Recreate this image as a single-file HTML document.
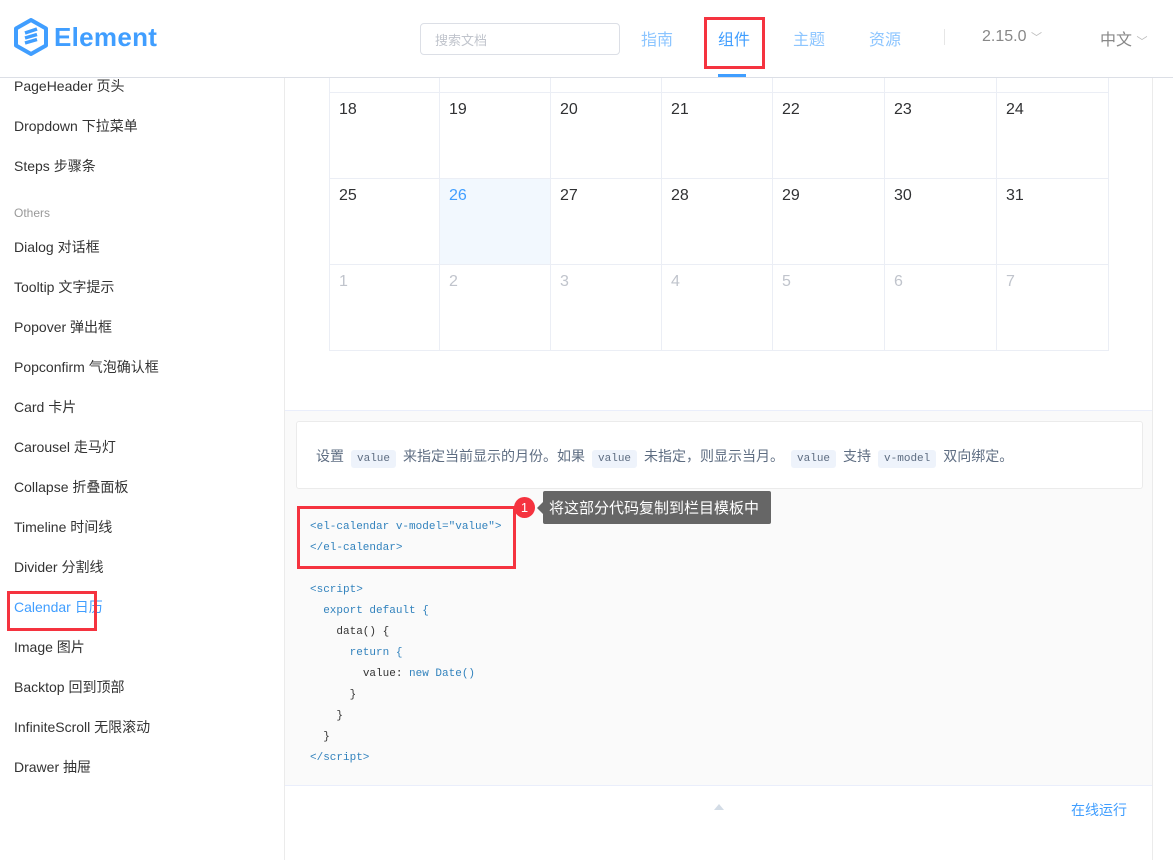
<!DOCTYPE html>
<html><head><meta charset="utf-8">
<style>
*{margin:0;padding:0;box-sizing:border-box}
body{width:1173px;height:826px;overflow:hidden;background:#fff;font-family:"Liberation Sans","Noto Sans CJK SC",sans-serif;position:relative;color:#303133}
.abs{position:absolute}
.hdr{left:0;top:0;width:1173px;height:78px;border-bottom:1px solid #dcdfe6;background:#fff;z-index:5}
.nav{font-size:16px;color:#8cc5ff;top:26px}
.side a{position:absolute;left:14px;font-size:14px;color:#333;white-space:nowrap}
.code{font-family:"Liberation Mono","Noto Sans CJK SC",monospace;font-size:11px;color:#3182bd;white-space:pre;line-height:21px}
.tag{display:inline-block;background:#eef3fb;color:#5e6d82;font-family:"Liberation Mono",monospace;font-size:11px;padding:3px 6px;border-radius:3px;margin:0 7px}
</style></head><body>
<div class="abs hdr">
  <svg class="abs" style="left:13px;top:18px" width="36" height="38" viewBox="0 0 36 38"><path d="M18 2 L33 10.5 V27.5 L18 36 L3 27.5 V10.5 Z" fill="none" stroke="#409eff" stroke-width="4" stroke-linejoin="round"/><path d="M12 15 L24 11 M12 20 L24 16.5 M12 25 L24 21.5" stroke="#409eff" stroke-width="3.5"/></svg>
  <div class="abs" style="left:54px;top:22px;font-size:26px;font-weight:bold;color:#409eff;letter-spacing:0.3px">Element</div>
  <div class="abs" style="left:420px;top:23px;width:200px;height:32px;border:1px solid #dcdfe6;border-radius:4px;font-size:13px;color:#c0c4cc;padding:6px 14px">搜索文档</div>
  <div class="abs nav" style="left:641px">指南</div>
  <div class="abs nav" style="left:718px;color:#409eff">组件</div>
  <div class="abs" style="left:718px;top:74px;width:28px;height:3px;background:#409eff"></div>
  <div class="abs" style="left:704px;top:17px;width:61px;height:52px;border:3px solid #f5333f"></div>
  <div class="abs nav" style="left:793px">主题</div>
  <div class="abs nav" style="left:869px">资源</div>
  <div class="abs" style="left:944px;top:29px;width:1px;height:16px;background:#e6e6e6"></div>
  <div class="abs" style="left:982px;top:28px;font-size:16px;color:#888">2.15.0 <span style="font-size:11px;color:#bbb">﹀</span></div>
  <div class="abs" style="left:1100px;top:26px;font-size:16px;color:#888">中文 <span style="font-size:11px;color:#bbb">﹀</span></div>
</div>
<div class="side">
  <a style="top:76px">PageHeader 页头</a>
  <a style="top:116px">Dropdown 下拉菜单</a>
  <a style="top:156px">Steps 步骤条</a>
  <a style="top:206px;font-size:12px;color:#999">Others</a>
  <a style="top:237px">Dialog 对话框</a>
  <a style="top:277px">Tooltip 文字提示</a>
  <a style="top:317px">Popover 弹出框</a>
  <a style="top:357px">Popconfirm 气泡确认框</a>
  <a style="top:397px">Card 卡片</a>
  <a style="top:437px">Carousel 走马灯</a>
  <a style="top:477px">Collapse 折叠面板</a>
  <a style="top:517px">Timeline 时间线</a>
  <a style="top:557px">Divider 分割线</a>
  <a style="top:597px;color:#409eff">Calendar 日历</a>
  <a style="top:637px">Image 图片</a>
  <a style="top:677px">Backtop 回到顶部</a>
  <a style="top:717px">InfiniteScroll 无限滚动</a>
  <a style="top:757px">Drawer 抽屉</a>
</div>
<div class="abs" style="left:7px;top:591px;width:90px;height:40px;border:3px solid #f5333f"></div>
<div class="abs" style="left:284px;top:60px;width:869px;height:800px;border-left:1px solid #ebebeb;border-right:1px solid #ebebeb"></div>
<div class="abs" style="left:329px;top:78px;width:1px;height:273px;background:#ebeef5"></div>
<div class="abs" style="left:329px;top:78px;width:780px;height:15px;border-bottom:1px solid #ebeef5;border-right:1px solid #ebeef5"></div>
<div class="abs" style="left:439px;top:78px;width:1px;height:273px;background:#ebeef5"></div>
<div class="abs" style="left:550px;top:78px;width:1px;height:273px;background:#ebeef5"></div>
<div class="abs" style="left:661px;top:78px;width:1px;height:273px;background:#ebeef5"></div>
<div class="abs" style="left:772px;top:78px;width:1px;height:273px;background:#ebeef5"></div>
<div class="abs" style="left:884px;top:78px;width:1px;height:273px;background:#ebeef5"></div>
<div class="abs" style="left:996px;top:78px;width:1px;height:273px;background:#ebeef5"></div>
<div class="abs" style="left:1108px;top:78px;width:1px;height:273px;background:#ebeef5"></div>
<div class="abs" style="left:329px;top:178px;width:780px;height:1px;background:#ebeef5"></div>
<div class="abs" style="left:329px;top:264px;width:780px;height:1px;background:#ebeef5"></div>
<div class="abs" style="left:329px;top:350px;width:780px;height:1px;background:#ebeef5"></div>
<div class="abs" style="left:440px;top:179px;width:110px;height:85px;background:#f2f8fe"></div>
<div style="font-size:16px">
<span class="abs" style="left:339px;top:101px">18</span><span class="abs" style="left:449px;top:101px">19</span><span class="abs" style="left:560px;top:101px">20</span><span class="abs" style="left:671px;top:101px">21</span><span class="abs" style="left:782px;top:101px">22</span><span class="abs" style="left:894px;top:101px">23</span><span class="abs" style="left:1006px;top:101px">24</span>
<span class="abs" style="left:339px;top:187px">25</span><span class="abs" style="left:449px;top:187px;color:#409eff">26</span><span class="abs" style="left:560px;top:187px">27</span><span class="abs" style="left:671px;top:187px">28</span><span class="abs" style="left:782px;top:187px">29</span><span class="abs" style="left:894px;top:187px">30</span><span class="abs" style="left:1006px;top:187px">31</span>
<span class="abs" style="left:339px;top:273px;color:#c0c4cc">1</span><span class="abs" style="left:449px;top:273px;color:#c0c4cc">2</span><span class="abs" style="left:560px;top:273px;color:#c0c4cc">3</span><span class="abs" style="left:671px;top:273px;color:#c0c4cc">4</span><span class="abs" style="left:782px;top:273px;color:#c0c4cc">5</span><span class="abs" style="left:894px;top:273px;color:#c0c4cc">6</span><span class="abs" style="left:1006px;top:273px;color:#c0c4cc">7</span>
</div>
<div class="abs" style="left:285px;top:410px;width:867px;height:376px;background:#fafafa;border-top:1px solid #eaeefb;border-bottom:1px solid #eaeefb"></div>
<div class="abs" style="left:296px;top:421px;width:847px;height:68px;background:#fff;border:1px solid #ebebeb;border-radius:3px;font-size:14px;color:#5e6d82;padding:24px 19px;white-space:nowrap">设置<span class="tag">value</span>来指定当前显示的月份。如果<span class="tag">value</span>未指定，则显示当月。<span class="tag">value</span>支持<span class="tag">v-model</span>双向绑定。</div>
<div class="abs code" style="left:310px;top:517px">&lt;el-calendar v-model="value"&gt;
&lt;/el-calendar&gt;</div>
<div class="abs" style="left:297px;top:506px;width:219px;height:63px;border:3px solid #f5333f"></div>
<div class="abs" style="left:514px;top:497px;width:21px;height:21px;border-radius:50%;background:#f5333f;color:#fff;font-size:13px;text-align:center;line-height:21px">1</div>
<div class="abs" style="left:543px;top:491px;width:228px;height:33px;background:#666;border-radius:2px;color:#fff;font-size:15px;padding:6px 6px">将这部分代码复制到栏目模板中</div>
<div class="abs" style="left:537px;top:502px;width:0;height:0;border-top:6px solid transparent;border-bottom:6px solid transparent;border-right:6px solid #666"></div>
<div class="abs code" style="left:310px;top:580px">&lt;script&gt;
  export default {
    <span style="color:#333">data() {</span>
      return {
        <span style="color:#333">value:</span> new Date()
      <span style="color:#333">}</span>
    <span style="color:#333">}</span>
  <span style="color:#333">}</span>
&lt;/script&gt;</div>
<div class="abs" style="left:714px;top:804px;width:0;height:0;border-left:5px solid transparent;border-right:5px solid transparent;border-bottom:6px solid #d3dce6"></div>
<div class="abs" style="left:1071px;top:800px;font-size:14px;color:#409eff">在线运行</div>
</body></html>
